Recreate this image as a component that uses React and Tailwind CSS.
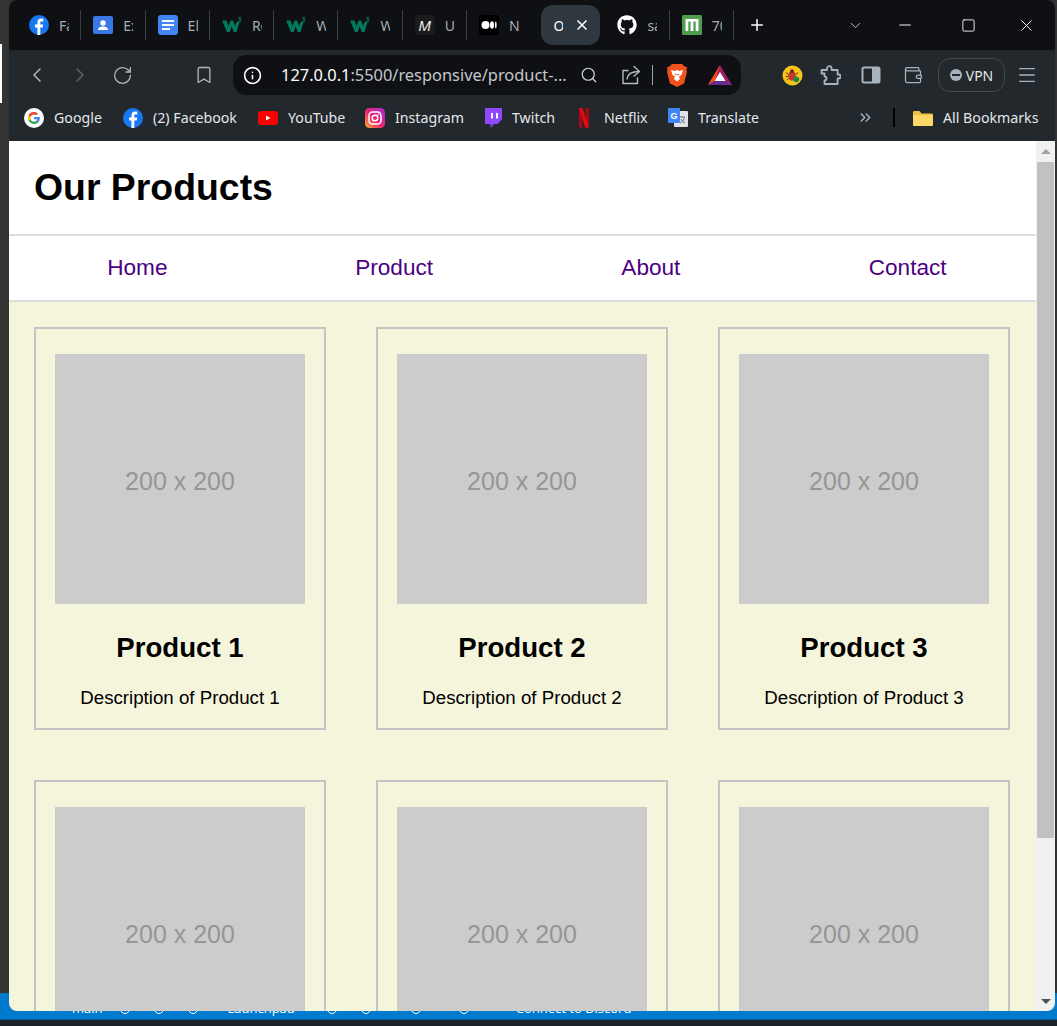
import React from "react";
import { ChevronLeft, ChevronRight, ChevronDown, RotateCw, Bookmark, Search, Wallet, Plus, Minus, Square, X, Menu, ChevronsRight, Info } from "lucide-react";
import { FaGithub } from "react-icons/fa";

const Fb = () => (
  <svg viewBox="0 0 20 20" className="h-5 w-5 shrink-0">
    <circle cx="10" cy="10" r="10" fill="#1877f2" />
    <path d="M11.3 20v-7.4h2.5l.4-3h-2.9V7.8c0-.9.3-1.4 1.5-1.4h1.5V3.7c-.4 0-1.200-.1-2.200-.1-2.200 0-3.700 1.300-3.700 3.800v2.200H6v3h2.400V20z" fill="#fff" />
  </svg>
);
const Contact = () => (
  <svg viewBox="0 0 20 20" className="h-5 w-5 shrink-0">
    <rect x="0" y="1" width="20" height="18" rx="2" fill="#3b78e7" />
    <circle cx="10" cy="8" r="2.700" fill="#fff" />
    <path d="M5 15c0-2.500 2.500-3.500 5-3.500s5 1 5 3.500z" fill="#fff" />
  </svg>
);
const Docs = () => (
  <svg viewBox="0 0 20 20" className="h-5 w-5 shrink-0">
    <rect width="20" height="20" rx="3" fill="#4285f4" />
    <path d="M4 5h12v2H4zM4 9h12v2H4zM4 13h8v2H4z" fill="#fff" />
  </svg>
);
const W3 = () => (
  <svg viewBox="0 0 20 20" className="h-5 w-5 shrink-0">
    <path d="M0 5.500h4.500l2 5.500 2-5.500h2.500l2 5.500 1.500-4h3L14.500 17h-2.800L9.700 11.500 7.700 17H5z" fill="#04795a" />
    <text x="15.500" y="6.500" fontSize="7" fill="#04795a" fontWeight="700" fontFamily="Liberation Sans, sans-serif">3</text>
  </svg>
);
const MIcon = () => (
  <div className="flex h-5 w-5 shrink-0 items-center justify-center rounded-sm bg-[#1c1c1e] font-['Liberation_Sans',sans-serif] text-[15px] italic leading-none text-[#f0f0f0]">M</div>
);
const MediumIcon = () => (
  <svg viewBox="0 0 20 20" className="h-5 w-5 shrink-0">
    <rect width="20" height="20" rx="2" fill="#000" />
    <ellipse cx="6.500" cy="10" rx="4" ry="4" fill="#fff" />
    <ellipse cx="13" cy="10" rx="2" ry="3.800" fill="#fff" />
    <ellipse cx="16.800" cy="10" rx="0.800" ry="3.400" fill="#fff" />
  </svg>
);
const Gh = () => <FaGithub className="h-5 w-5 shrink-0 text-white" />;
const GreenM = () => (
  <svg viewBox="0 0 20 20" className="h-5 w-5 shrink-0">
    <rect width="20" height="20" rx="1.500" fill="#4f9d4f" />
    <path d="M3.500 4h13v12h-2.800V6.500h-2.300V16H8.600V6.500H6.300V16H3.500z" fill="#fff" />
  </svg>
);
const Google = () => (
  <svg viewBox="0 0 20 20" className="h-5 w-5 shrink-0">
    <circle cx="10" cy="10" r="10" fill="#fff" />
    <path d="M15.800 10.200c0-.4 0-.8-.1-1.200H10v2.300h3.300c-.1.800-.6 1.400-1.200 1.800v1.500h2c1.100-1.100 1.700-2.600 1.700-4.400z" fill="#4285f4" />
    <path d="M10 16c1.600 0 3-.5 4-1.500l-2-1.500c-.5.400-1.200.6-2 .6-1.600 0-2.900-1-3.400-2.400H4.600v1.600C5.600 14.800 7.600 16 10 16z" fill="#34a853" />
    <path d="M6.600 11.200c-.2-.8-.2-1.600 0-2.400V7.200h-2c-.8 1.700-.8 3.800 0 5.600z" fill="#fbbc05" />
    <path d="M10 6.400c.9 0 1.700.3 2.300.9l1.700-1.700C13 4.600 11.600 4 10 4 7.600 4 5.600 5.200 4.600 7.200l2 1.600C7.100 7.400 8.400 6.400 10 6.400z" fill="#ea4335" />
  </svg>
);
const YouTube = () => (
  <svg viewBox="0 0 20 20" className="h-5 w-5 shrink-0">
    <rect x="0" y="3" width="20" height="14" rx="3.500" fill="#f00" />
    <path d="M8 7.500v5l4.500-2.500z" fill="#fff" />
  </svg>
);
const Instagram = () => (
  <svg viewBox="0 0 20 20" className="h-5 w-5 shrink-0">
    <defs>
      <linearGradient id="ig" x1="0" y1="1" x2="1" y2="0">
        <stop offset="0" stopColor="#fdb32b" />
        <stop offset="0.450" stopColor="#f0246f" />
        <stop offset="1" stopColor="#a22cd8" />
      </linearGradient>
    </defs>
    <rect width="20" height="20" rx="4.500" fill="url(#ig)" />
    <rect x="4" y="4" width="12" height="12" rx="3.500" fill="none" stroke="#fff" strokeWidth="1.500" />
    <circle cx="10" cy="10" r="2.800" fill="none" stroke="#fff" strokeWidth="1.500" />
    <circle cx="13.500" cy="6.500" r="0.800" fill="#fff" />
  </svg>
);
const Twitch = () => (
  <svg viewBox="0 0 20 20" className="h-5 w-5 shrink-0">
    <path d="M3 0h17v11.500L15.500 16H12l-3.500 4v-4H3z" fill="#9146ff" />
    <path d="M9 5h2v5.500H9zM14 5h2v5.500h-2z" fill="#fff" />
  </svg>
);
const Netflix = () => (
  <svg viewBox="0 0 20 20" className="h-5 w-5 shrink-0">
    <path d="M5 0h3.500v20L5 19.400z" fill="#a50a12" />
    <path d="M11.500 0H15v19.400l-3.500.6z" fill="#a50a12" />
    <path d="M5 0h3.500L15 19.400 11.500 20z" fill="#e50914" />
  </svg>
);
const Translate = () => (
  <svg viewBox="0 0 20 20" className="h-5 w-5 shrink-0">
    <rect x="6" y="3" width="14" height="16" rx="1" fill="#dfe3e7" />
    <path d="M11 9h6M14 8v1M12 15c2.500-1 4-3 4.500-6M13 11c.8 1.800 2 3 4 4" fill="none" stroke="#6b7480" strokeWidth="1" />
    <rect x="0" y="0" width="12" height="15" rx="1" fill="#4285f4" />
    <text x="6" y="11" textAnchor="middle" fontSize="9" fontWeight="700" fill="#fff" fontFamily="Liberation Sans, sans-serif">G</text>
  </svg>
);
const Folder = () => (
  <svg viewBox="0 0 20 20" className="h-5 w-5 shrink-0">
    <path d="M0 4.500C0 3.500.7 3 1.500 3h5l2 2.500h10c.9 0 1.500.6 1.500 1.500v9.500c0 .9-.6 1.500-1.500 1.500h-17C.7 18 0 17.400 0 16.500z" fill="#f0c040" />
    <path d="M0 7h20v9.500c0 .9-.6 1.500-1.500 1.500h-17C.7 18 0 17.400 0 16.500z" fill="#fbd766" />
  </svg>
);
const Brave = () => (
  <svg viewBox="0 0 20 24" className="h-6 w-5 shrink-0">
    <path d="M5 1h10l2.500 2.500L20 4l-.5 3 .5 2-3 11.500-7 3.500-7-3.500L0 9l.5-2L0 4l2.500-.5z" fill="#f1511b" />
    <path d="M4 7l4 1 2-1 2 1 4-1-1.500 5L12 13.500l1 2.500-3 2.500L7 16l1-2.500L5.500 12z" fill="#fff" />
    <path d="M8 11l1.500 1M12 11l-1.500 1" stroke="#f1511b" strokeWidth="1.200" />
  </svg>
);
const Bat = () => (
  <svg viewBox="0 0 24 20" className="h-5 w-6 shrink-0">
    <path d="M12 0L0 20h24z" fill="#9e1f63" />
    <path d="M12 0L0 20l6.500-4z" fill="#ff5000" />
    <path d="M0 20h24l-6.500-4h-11z" fill="#662d91" />
    <path d="M12 7l-5.500 9h11z" fill="#fff" />
  </svg>
);
const BugExt = () => (
  <svg viewBox="0 0 22 22" className="h-[21px] w-[21px] shrink-0">
    <circle cx="11" cy="11" r="10.500" fill="#f5c518" />
    <ellipse cx="10.500" cy="11.500" rx="4" ry="5" fill="#c0392b" />
    <circle cx="10.500" cy="6.500" r="2" fill="#7b241c" />
    <path d="M4 8l3 2M4 12h2.500M5 16l2-2M17 8l-3 2" stroke="#7b241c" strokeWidth="1" />
    <circle cx="15" cy="15" r="3" fill="#1e8449" />
  </svg>
);
const SidePanel = () => (
  <svg viewBox="0 0 20 20" className="h-5 w-5 shrink-0">
    <rect x="1.500" y="2.500" width="17" height="15" rx="1.500" fill="none" stroke="#a6b4c0" strokeWidth="2" />
    <rect x="11" y="2.500" width="7.500" height="15" fill="#a6b4c0" />
  </svg>
);
const ShareIcon = () => (
  <svg viewBox="0 0 20 20" fill="none" stroke="#b6bcc2" strokeWidth="1.400" strokeLinecap="round" strokeLinejoin="round" className="h-5 w-5 shrink-0">
    <path d="M7 5.500H2v13h14.500V13" />
    <path d="M6 14c.5-5 4-7.500 12-7.500" />
    <path d="M13 1.500l5.500 5L13 11" />
  </svg>
);
const PuzzleIcon = () => (
  <svg viewBox="0 0 22 22" fill="none" stroke="#a6b4c0" strokeWidth="1.800" strokeLinejoin="round" className="h-[22px] w-[22px] shrink-0">
    <path d="M2.500 6H8V4.500a2.300 2.300 0 0 1 4.600 0V6h6v4.500h1a2 2 0 0 1 0 4h-1V20H5.500v-3.500a2 2 0 1 0 0-4V9.500H2.500z" />
  </svg>
);

const tabs = [
  { icon: <Fb />, t: "Facebook" },
  { icon: <Contact />, t: "Example" },
  { icon: <Docs />, t: "Elements" },
  { icon: <W3 />, t: "Responsive" },
  { icon: <W3 />, t: "Web" },
  { icon: <W3 />, t: "Web" },
  { icon: <MIcon />, t: "Ui" },
  { icon: <MediumIcon />, t: "Nav" },
];

const bookmarks = [
  { icon: <Google />, t: "Google", w: "w-[99px]" },
  { icon: <Fb />, t: "(2) Facebook", w: "w-[135px]" },
  { icon: <YouTube />, t: "YouTube", w: "w-[107px]" },
  { icon: <Instagram />, t: "Instagram", w: "w-[117px]" },
  { icon: <Twitch />, t: "Twitch", w: "w-[92px]" },
  { icon: <Netflix />, t: "Netflix", w: "w-[94px]" },
  { icon: <Translate />, t: "Translate", w: "w-[190px]" },
];

function Tab({ icon, t, sep = true }) {
  return (
    <div className={`flex h-[30px] w-[64.3px] shrink-0 items-center pl-3 ${sep ? "border-r border-[#3b3f44]" : ""}`}>
      {icon}
      <span className="ml-[10px] block w-[10px] shrink-0 overflow-hidden whitespace-nowrap text-[14px] text-[#a8acb0]">{t}</span>
    </div>
  );
}

function Card({ n }) {
  return (
    <div className="flex flex-col items-center border-2 border-[#c4c4c4] pb-5 pt-[25px]">
      <div className="flex h-[250px] w-[250px] shrink-0 items-center justify-center bg-[#cccccc] pt-[6px] text-[25px] text-[#969696]">200 x 200</div>
      <h3 className="mt-[28px] text-[27.6px] font-bold leading-8 text-black">Product {n}</h3>
      <p className="mt-[23px] text-[18.7px] leading-[21px] text-black">Description of Product {n}</p>
    </div>
  );
}

const Ring = ({ cls }) => <span className={`block h-[10px] w-[10px] shrink-0 rounded-full border border-white ${cls}`} />;

export default function App() {
  return (
    <div className="relative h-[1026px] w-[1057px] overflow-hidden bg-[#333333]">
      {/* what lies behind the browser window */}
      <div className="absolute left-0 top-[44px] h-[59px] w-[2px] bg-white" />
      <div className="absolute bottom-0 left-0 right-0 h-[33px] bg-[#1a2327]">
        <div className="flex h-[27px] items-center border-b border-[#0b5e94] bg-[#007acc] pl-[72px] pt-[5px] font-['Open_Sans',sans-serif] text-[13px] text-white">
          <span>main</span>
          <Ring cls="ml-[17px]" />
          <Ring cls="ml-[24px]" />
          <Ring cls="ml-[24px]" />
          <span className="ml-[30px]">Launchpad</span>
          <Ring cls="ml-[32px]" />
          <Ring cls="ml-[24px]" />
          <Ring cls="ml-[40px]" />
          <Ring cls="ml-[38px]" />
          <span className="ml-[47px]">Connect to Discord</span>
        </div>
      </div>

      {/* browser window */}
      <div className="absolute left-[9px] top-0 flex h-[1011px] w-[1046px] flex-col overflow-hidden rounded-lg font-['Liberation_Sans',sans-serif]">
        {/* tab strip */}
        <div className="flex h-[50px] shrink-0 items-center bg-[#0e1014] pl-2 font-['Noto_Sans',sans-serif]">
          {tabs.map((tab, i) => (
            <Tab key={i} icon={tab.icon} t={tab.t} sep={i !== 7} />
          ))}
          <div className="ml-[10px] flex h-10 w-[59px] shrink-0 items-center justify-between rounded-xl bg-[#2f383e] pl-3 pr-[10px] text-[14px] text-white">
            <span className="block w-[10px] overflow-hidden">Our</span>
            <X size={16} strokeWidth={2.5} />
          </div>
          <div className="ml-[5px]">
            <Tab icon={<Gh />} t="sass" />
          </div>
          <Tab icon={<GreenM />} t="7000" />
          <Plus size={18} strokeWidth={2} className="ml-[14px] shrink-0 text-white" />
          <ChevronDown size={17} strokeWidth={1.2} className="ml-[81px] shrink-0 text-[#d0d3d6]" />
          <Minus size={18} strokeWidth={1.3} className="ml-[32px] shrink-0 text-white" />
          <Square size={15} strokeWidth={1.4} className="ml-[47px] shrink-0 rounded-[1px] text-white" />
          <X size={19} strokeWidth={1.2} className="ml-[41px] shrink-0 text-white" />
        </div>

        {/* toolbar */}
        <div className="flex h-[50px] shrink-0 items-center bg-[#22282c] pl-4">
          <ChevronLeft size={24} strokeWidth={1.5} className="shrink-0 text-[#aeb6bc]" />
          <ChevronRight size={24} strokeWidth={1.5} className="ml-[19px] shrink-0 text-[#5c646a]" />
          <RotateCw size={21} strokeWidth={1.5} className="ml-[20px] shrink-0 text-[#aeb6bc]" />
          <Bookmark size={20} strokeWidth={1.6} className="ml-[61px] shrink-0 text-[#aeb6bc]" />
          <div className="ml-[19px] flex h-10 w-[508px] shrink-0 items-center rounded-[14px] bg-[#0e1014] pl-[10px]">
            <Info size={19} strokeWidth={2} className="shrink-0 text-white" />
            <span className="ml-[19px] w-[299px] shrink-0 whitespace-nowrap font-['Noto_Sans',sans-serif] text-[16.4px] text-[#c4c8cc]">
              <span className="text-white">127.0.0.1</span>:5500/responsive/product-...
            </span>
            <Search size={18} strokeWidth={1.6} className="shrink-0 text-[#d0d4d8]" />
            <div className="ml-[23px]"><ShareIcon /></div>
            <div className="ml-[11px] h-5 w-px shrink-0 bg-[#9aa0a6]" />
            <div className="ml-[14px]"><Brave /></div>
            <div className="ml-[21px]"><Bat /></div>
          </div>
          <div className="ml-[41px]"><BugExt /></div>
          <div className="ml-[16px]"><PuzzleIcon /></div>
          <div className="ml-[20px]"><SidePanel /></div>
          <Wallet size={20} strokeWidth={1.5} className="ml-[22px] shrink-0 text-[#a6b4c0]" />
          <div className="ml-[15px] flex h-[34px] w-[67px] shrink-0 items-center justify-center gap-1 rounded-xl border border-[#41494f] font-['Noto_Sans',sans-serif] text-[14px] text-[#e4e7ea]">
            <span className="flex h-3 w-3 items-center justify-center rounded-full bg-[#a6b0ba]">
              <span className="h-[2px] w-2 bg-[#22282c]" />
            </span>
            VPN
          </div>
          <Menu size={22} strokeWidth={1.4} className="ml-[11px] shrink-0 text-[#a6b4c0]" />
        </div>

        {/* bookmarks */}
        <div className="flex h-[41px] shrink-0 items-start bg-[#22282c] pl-[15px] pt-[7px] font-['Noto_Sans',sans-serif] text-[14.2px] text-[#e4e7ea]">
          {bookmarks.map((b) => (
            <div key={b.t} className={`flex shrink-0 items-center gap-[10px] whitespace-nowrap ${b.w}`}>
              {b.icon}
              <span>{b.t}</span>
            </div>
          ))}
          <ChevronsRight size={17} strokeWidth={2} className="ml-[-1px] mt-[2px] shrink-0 text-[#a6b4c0]" />
          <div className="ml-[19px] mt-[1px] h-[19px] w-[2px] shrink-0 bg-black" />
          <div className="ml-[18px] flex shrink-0 items-center gap-[10px] whitespace-nowrap">
            <Folder />
            <span>All Bookmarks</span>
          </div>
        </div>

        {/* page and scrollbar */}
        <div className="flex min-h-0 flex-1">
          <div className="min-w-0 flex-1 overflow-hidden bg-[#f5f5dc]">
            <header className="flex h-[95px] items-center border-b-2 border-[#dddddd] bg-white pl-[25px]">
              <h1 className="text-[37.4px] font-bold leading-none text-black">Our Products</h1>
            </header>
            <nav className="flex h-[66px] items-center border-b-2 border-[#dddddd] bg-white text-[22.6px] text-[#4b0082]">
              <a className="flex-1 text-center">Home</a>
              <a className="flex-1 text-center">Product</a>
              <a className="flex-1 text-center">About</a>
              <a className="flex-1 text-center">Contact</a>
            </nav>
            <main className="grid grid-cols-[repeat(3,292px)] gap-[50px] p-[25px]">
              {[1, 2, 3, 4, 5, 6].map((n) => (
                <Card key={n} n={n} />
              ))}
            </main>
          </div>
          <div className="flex w-[19px] shrink-0 flex-col items-center bg-[#f1f1f1]">
            <div className="mt-[8px] h-0 w-0 border-x-[5px] border-b-[5px] border-x-transparent border-b-[#a3a3a3]" />
            <div className="mt-2 h-[676px] w-[17px] bg-[#c1c1c1]" />
            <div className="mb-[7px] mt-auto h-0 w-0 border-x-[5px] border-t-[5px] border-x-transparent border-t-[#505050]" />
          </div>
        </div>
      </div>
    </div>
  );
}
